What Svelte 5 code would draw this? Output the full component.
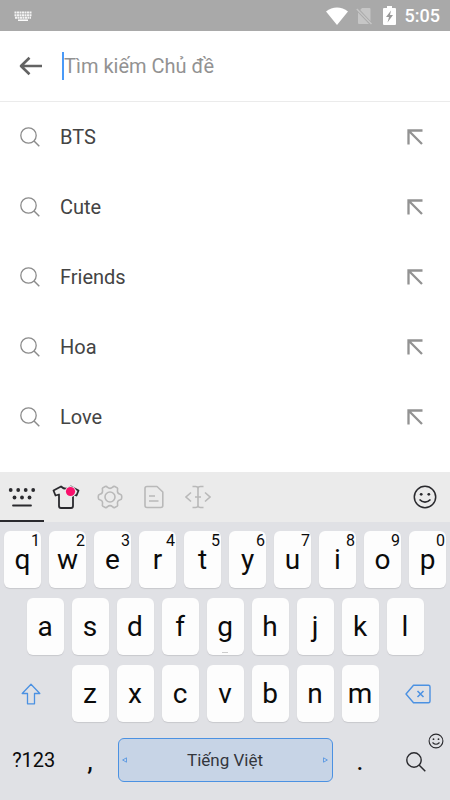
<script>
    let query = "";
    let input;

    const topics = ["BTS", "Cute", "Friends", "Hoa", "Love"];
    const top_row = "qwertyuiop".split("");
    const middle_row = "asdfghjkl".split("");
    const bottom_row = "zxcvbnm".split("");

    function Type(letter) {
        query += letter;
    }

    function Erase() {
        query = query.slice(0, -1);
    }

    function Fill(topic) {
        query = topic;
        input.focus();
    }
</script>

<svelte:head>
    <title>Chủ đề</title>
</svelte:head>

<div class="screen">
    <div class="status">
        <svg class="status_keyboard" width="18" height="10" viewBox="0 0 18 10" aria-hidden="true">
            <path d="M.5 1.500H17.500M.5 4.200H17.500M1 6.800H17" stroke="#f4f4f4" stroke-width="2" stroke-dasharray="2 .5" />
            <path d="M4 9.200H14" stroke="#fff" stroke-width="1.500" />
        </svg>
        <svg width="22" height="18" viewBox="0 0 22 18" aria-hidden="true">
            <path d="M0 4.500C6.500-.8 15.500-.8 22 4.500L11 18Z" fill="#fff" />
        </svg>
        <svg class="sim" width="16" height="18" viewBox="0 0 16 18" aria-hidden="true">
            <path d="M6 1H13.500Q14.500 1 14.500 2V14L4.200 3ZM2 5.500L13 17H3Q2 17 2 16Z" fill="#c6c6c6" />
            <path d="M.8 2L15.500 17" stroke="#c6c6c6" stroke-width="1.500" />
        </svg>
        <svg class="battery" width="13" height="19" viewBox="0 0 13 19" aria-hidden="true">
            <path d="M4 0H9V2H12Q13 2 13 3V18Q13 19 12 19H1Q0 19 0 18V3Q0 2 1 2H4Z" fill="#fff" />
            <path d="M8 4.500L3 11H6L4.500 16.500L10 9H7Z" fill="#999" />
        </svg>
        <span class="time">5:05</span>
    </div>

    <form class="search" on:submit|preventDefault>
        <button class="back" type="button" aria-label="Quay lại">
            <svg width="24" height="20" viewBox="0 0 24 20">
                <path d="M23 10H2M10.500 1.800L2 10L10.500 18.200" fill="none" stroke="#636363" stroke-width="2.600" stroke-linejoin="round" />
            </svg>
        </button>
        <span class="caret"></span>
        <input type="text" aria-label="Tìm kiếm Chủ đề" placeholder="Tìm kiếm Chủ đề" bind:this={input} bind:value={query}>
    </form>

    <ul class="topics">
        {#each topics as topic}
            <li>
                <svg width="20" height="20" viewBox="0 0 20 20" aria-hidden="true">
                    <circle cx="8.500" cy="8.500" r="7.700" fill="none" stroke="#8b8b8b" stroke-width="1.300" />
                    <path d="M14 14L19.300 19.300" stroke="#8b8b8b" stroke-width="1.500" />
                </svg>
                <a href="#{topic}">{topic}</a>
                <button class="fill" aria-label="Điền {topic}" on:click={() => Fill(topic)}>
                    <svg width="16" height="16" viewBox="0 0 16 16">
                        <path d="M1.500 15.500V1.500H15.500M1.500 1.500L15 15" fill="none" stroke="#929292" stroke-width="2.300" />
                    </svg>
                </button>
            </li>
        {/each}
    </ul>

    <div class="keyboard">
        <div class="tools">
            <button class="tool active" aria-label="Bàn phím">
                <svg width="28" height="24" viewBox="0 0 28 24">
                    <g fill="#2a2a2e">
                        <circle cx="2.700" cy="5" r="1.900" /><circle cx="10.200" cy="5" r="1.900" />
                        <circle cx="17.700" cy="5" r="1.900" /><circle cx="25.200" cy="5" r="1.900" />
                        <circle cx="6.500" cy="12.500" r="1.900" /><circle cx="14" cy="12.500" r="1.900" />
                        <circle cx="21.500" cy="12.500" r="1.900" />
                    </g>
                    <path d="M5 20.500H23" stroke="#2a2a2e" stroke-width="1.800" stroke-linecap="round" />
                </svg>
            </button>
            <button class="tool" aria-label="Giao diện">
                <svg width="28" height="26" viewBox="0 0 28 26">
                    <path d="M9 2.500L1.500 6.500L3.500 11.500L7 10.500V22Q7 24 9 24H19Q21 24 21 22V10.500L24.500 11.500L26.500 6.500L19 2.500Q14 7 9 2.500Z" fill="none" stroke="#2a2a2e" stroke-width="1.800" stroke-linejoin="round" />
                    <circle cx="18.500" cy="7.500" r="5.500" fill="#ebebeb" />
                    <circle cx="18.500" cy="7.500" r="4.600" fill="#f9116c" />
                </svg>
            </button>
            <button class="tool" aria-label="Cài đặt">
                <svg width="26" height="24" viewBox="0 0 26 24">
                    <path d="M8.200 1.500Q9.500 1 10.300 2.200Q13 4.500 15.700 2.200Q16.500 1 17.800 1.500L20.200 2.900Q21 3.700 20.500 5Q20 8.500 23.200 9.200Q24.700 9.600 24.700 11V13Q24.700 14.400 23.200 14.800Q20 15.500 20.500 19Q21 20.300 20.200 21.100L17.800 22.500Q16.500 23 15.700 21.800Q13 19.500 10.300 21.800Q9.500 23 8.200 22.500L5.800 21.100Q5 20.300 5.500 19Q6 15.500 2.800 14.800Q1.300 14.400 1.300 13V11Q1.300 9.600 2.800 9.200Q6 8.500 5.500 5Q5 3.700 5.800 2.900Z" fill="none" stroke="#b9b9b9" stroke-width="1.600" />
                    <circle cx="13" cy="12" r="5" fill="none" stroke="#b9b9b9" stroke-width="1.600" />
                </svg>
            </button>
            <button class="tool" aria-label="Ghi chú">
                <svg width="20" height="24" viewBox="0 0 20 24">
                    <path d="M3 1.500H13L18.800 7V20.500Q18.800 22.500 16.800 22.500H3Q1 22.500 1 20.500V3.500Q1 1.500 3 1.500Z" fill="none" stroke="#b9b9b9" stroke-width="1.600" stroke-linejoin="round" />
                    <path d="M5 11H11M5 16H14.500" stroke="#b9b9b9" stroke-width="1.600" />
                </svg>
            </button>
            <button class="tool" aria-label="Di chuyển con trỏ">
                <svg width="26" height="24" viewBox="0 0 26 24">
                    <path d="M6 7.500L1 12L6 16.500M20 7.500L25 12L20 16.500M7.500 1.500H10.500Q13 1.500 13 3.500Q13 1.500 15.500 1.500H18.500M13 3V21M7.500 22.500H10.500Q13 22.500 13 20.500Q13 22.500 15.500 22.500H18.500M10 12H16" fill="none" stroke="#b9b9b9" stroke-width="1.600" />
                </svg>
            </button>
            <button class="tool emoji" aria-label="Biểu tượng cảm xúc">
                <svg width="24" height="24" viewBox="0 0 24 24">
                    <circle cx="12" cy="12" r="10.700" fill="none" stroke="#2a2a2e" stroke-width="1.500" />
                    <circle cx="8.200" cy="9.300" r="1.400" fill="#2a2a2e" /><circle cx="15.800" cy="9.300" r="1.400" fill="#2a2a2e" />
                    <path d="M6.500 14.500Q12 20 17.500 14.500" fill="none" stroke="#2a2a2e" stroke-width="1.700" />
                </svg>
            </button>
        </div>

        <div class="keys">
            <div class="row">
                {#each top_row as letter, i}
                    <button class="key" on:click={() => Type(letter)}>{letter}<span class="digit">{(i + 1) % 10}</span></button>
                {/each}
            </div>
            <div class="row middle">
                {#each middle_row as letter}
                    <button class="key" on:click={() => Type(letter)}>{letter}{#if letter === "g"}<span class="more"></span>{/if}</button>
                {/each}
            </div>
            <div class="row">
                <button class="plain wide" aria-label="Viết hoa">
                    <svg class="shift" width="20" height="22" viewBox="0 0 20 22">
                        <path d="M10 1.200L18.800 10.500H13.500V20.800H6.500V10.500H1.200Z" fill="none" stroke="#4b91e2" stroke-width="1.300" stroke-linejoin="round" />
                    </svg>
                </button>
                {#each bottom_row as letter}
                    <button class="key" on:click={() => Type(letter)}>{letter}</button>
                {/each}
                <button class="plain wide" aria-label="Xóa" on:click={Erase}>
                    <svg class="erase" width="26" height="20" viewBox="0 0 26 20">
                        <path d="M8.500 1.200H23.500Q25 1.200 25 2.700V17.300Q25 18.800 23.500 18.800H8.500L1 10Z" fill="none" stroke="#4b91e2" stroke-width="1.400" stroke-linejoin="round" />
                        <path d="M12.500 7L18.500 13M18.500 7L12.500 13" stroke="#4b91e2" stroke-width="1.500" />
                    </svg>
                </button>
            </div>
            <div class="row last">
                <button class="plain wide symbols">?123</button>
                <button class="plain mark" on:click={() => Type(",")}>,</button>
                <button class="space" on:click={() => Type(" ")}>
                    <svg width="5" height="6" viewBox="0 0 5 6" aria-hidden="true"><path d="M4.500 .8V5.200L.6 3Z" fill="none" stroke="#4b91e2" stroke-width=".8" /></svg>
                    Tiếng Việt
                    <svg width="5" height="6" viewBox="0 0 5 6" aria-hidden="true"><path d="M.5 .8V5.200L4.400 3Z" fill="none" stroke="#4b91e2" stroke-width=".8" /></svg>
                </button>
                <button class="plain mark" on:click={() => Type(".")}>.</button>
                <button class="plain wide find" aria-label="Tìm kiếm">
                    <svg width="20" height="20" viewBox="0 0 20 20">
                        <circle cx="8" cy="8" r="7.200" fill="none" stroke="#2a2a2e" stroke-width="1.400" />
                        <path d="M13 13L19.300 19.300" stroke="#2a2a2e" stroke-width="1.500" />
                    </svg>
                    <svg class="badge" width="16" height="16" viewBox="0 0 16 16">
                        <circle cx="8" cy="8" r="6.900" fill="none" stroke="#2a2a2e" stroke-width="1.100" />
                        <circle cx="5.500" cy="6.200" r=".9" fill="#2a2a2e" /><circle cx="10.500" cy="6.200" r=".9" fill="#2a2a2e" />
                        <path d="M4.500 9.500Q8 13 11.500 9.500" fill="none" stroke="#2a2a2e" stroke-width="1.100" />
                    </svg>
                </button>
            </div>
        </div>
    </div>
</div>

<style>
    :global(body) {
        margin: 0;
        background-color: #fff;
    }
    .screen {
        display: flex;
        flex-direction: column;
        min-height: 100vh;
        font-family: Roboto, "Liberation Sans", sans-serif;
        color: #444;
    }
    button {
        display: flex;
        align-items: center;
        justify-content: center;
        min-width: 0;
        padding: 0;
        border: 0;
        background: none;
        font-family: inherit;
        color: inherit;
    }
    svg {
        flex: none;
        display: block;
    }
    .status {
        display: flex;
        align-items: center;
        height: 31px;
        padding: 0 10px 0 14px;
        background-color: #a9a9a9;
    }
    .status_keyboard {
        margin-right: auto;
    }
    .sim {
        margin-left: 8px;
    }
    .battery {
        margin-left: 11px;
    }
    .time {
        margin-left: 9px;
        font-size: 18px;
        font-weight: 500;
        color: #fff;
    }
    .search {
        display: flex;
        align-items: center;
        height: 70px;
        padding-left: 19px;
        border-bottom: 1px solid #ebebeb;
    }
    .back {
        height: 48px;
        margin-right: 19px;
    }
    .caret {
        width: 2px;
        height: 28px;
        background-color: #4a9af8;
    }
    .search input {
        flex: 1;
        min-width: 0;
        padding: 0;
        border: 0;
        outline: 0;
        background: none;
        font-family: inherit;
        font-size: 20px;
        color: #444;
    }
    .search input::placeholder {
        color: #929292;
        opacity: 1;
    }
    .topics {
        flex: 1;
        margin: 0;
        padding: 0 0 20px;
        list-style: none;
    }
    .topics li {
        display: flex;
        align-items: center;
        height: 70px;
        padding: 0 20px;
    }
    .topics a {
        flex: 1;
        margin-left: 20px;
        font-size: 20px;
        color: #444;
        text-decoration: none;
    }
    .fill {
        width: 30px;
        height: 48px;
    }
    .keyboard {
        background-color: #e0e1e5;
        color: #0b0b0b;
    }
    .tools {
        display: flex;
        height: 50px;
        background-color: #ebebeb;
    }
    .tool {
        width: 44px;
    }
    .active {
        box-shadow: inset 0 -2px #2a2a2e;
    }
    .emoji {
        width: 50px;
        margin-left: auto;
    }
    .keys {
        display: flex;
        flex-direction: column;
        gap: 10px;
        padding: 9px 0 18px;
    }
    /* half a letter key per column */
    .row {
        display: grid;
        grid-template-columns: repeat(20, 1fr);
        height: 57px;
    }
    .key {
        position: relative;
        grid-column: span 2;
        margin: 0 4px;
        border-radius: 6px;
        background-color: #fdfdfd;
        box-shadow: 0 1px 1px #c8c9cd;
        font-size: 28px;
    }
    .middle .key:first-child {
        grid-column: 2 / span 2;
    }
    .digit {
        position: absolute;
        top: 0;
        right: 1px;
        font-size: 16px;
    }
    .more {
        position: absolute;
        bottom: 2px;
        width: 6px;
        height: 1px;
        background-color: #ccc;
    }
    .plain {
        position: relative;
        grid-column: span 2;
    }
    .wide {
        grid-column: span 3;
    }
    .shift {
        margin-right: 6px;
    }
    .erase {
        margin-left: 4px;
    }
    .last {
        height: 44px;
        margin-top: 6px;
    }
    .symbols {
        font-size: 20px;
    }
    .mark {
        font-size: 28px;
    }
    .space {
        grid-column: span 10;
        justify-content: space-between;
        margin: 0 5px;
        padding: 0 3px;
        border: 1px solid #4b91e2;
        border-radius: 6px;
        background-color: #c7d4e6;
        font-size: 17px;
        color: #33363c;
    }
    .find {
        padding-top: 4px;
    }
    .badge {
        position: absolute;
        top: -5px;
        right: 6px;
    }
</style>
